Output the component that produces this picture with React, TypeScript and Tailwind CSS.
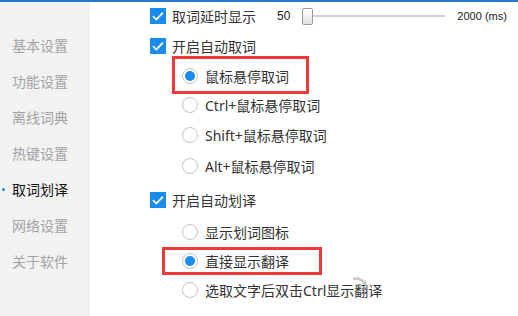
import React from 'react';

const font = { fontFamily: '"Noto Sans", "Noto Sans CJK SC", sans-serif' };

function Check() {
  return (
    <span className="flex h-4 w-4 shrink-0 items-center justify-center bg-[#1a8cee]">
      <svg viewBox="0 0 16 16" className="h-4 w-4">
        <path d="M3 8.2 L6.4 11.5 L13 4.6" fill="none" stroke="#fff" strokeWidth="1.7" />
      </svg>
    </span>
  );
}

function Radio({ on }: { on?: boolean }) {
  return (
    <span className="flex h-[16px] w-[16px] shrink-0 items-center justify-center rounded-full border border-[#c4c4c4] bg-white">
      {on && <span className="h-[10px] w-[10px] rounded-full bg-[#1a8cee]" />}
    </span>
  );
}

const menu = ['基本设置', '功能设置', '离线词典', '热键设置', '取词划译', '网络设置', '关于软件'];

export default function App() {
  return (
    <div className="flex h-[316px] w-[518px] flex-col overflow-hidden bg-white text-[14px] text-[#333]" style={font}>
      <div className="h-[2px] w-full shrink-0 bg-[#1f7acc]" />
      <div className="flex flex-1">
        {/* Sidebar */}
        <div className="w-[90px] shrink-0 bg-[#f2f2f2] pt-[25px]">
          {menu.map((m) => (
            <div key={m} className="relative flex h-[36px] items-center pl-[12px]">
              {m === '取词划译' ? (
                <>
                  <span className="absolute left-[2px] top-[17px] h-[3px] w-[3px] rounded-full bg-[#1a8cee]" />
                  <span className="text-[#111]">{m}</span>
                </>
              ) : (
                <span className="text-[#a3a3a3]">{m}</span>
              )}
            </div>
          ))}
        </div>

        {/* Content */}
        <div className="flex flex-1 flex-col pl-[60px]">
          <div className="flex h-[28px] items-center">
            <Check />
            <span className="ml-[6px]">取词延时显示</span>
            <span className="ml-[21px] text-[12px] text-[#222]" style={{ fontFamily: '"Liberation Sans", sans-serif' }}>50</span>
            <div className="ml-[12px] flex items-center">
              <span className="h-[17px] w-[11px] rounded-[2px] border border-[#9a9a9a] bg-gradient-to-b from-white to-[#e2e2e2]" />
              <span className="h-[2px] w-[132px] bg-[#d0d0d0]" />
            </div>
            <span className="ml-[12px] text-[11px] text-[#222]" style={{ fontFamily: '"Liberation Sans", sans-serif' }}>2000 (ms)</span>
          </div>
          <div className="flex h-[32px] items-center">
            <Check />
            <span className="ml-[6px]">开启自动取词</span>
          </div>
          <div className="relative flex h-[28px] items-center pl-[32px]">
            <span className="absolute left-[22px] top-[-6px] h-[38px] w-[137px] border-[3px] border-[#f03a3a]" />
            <Radio on />
            <span className="ml-[7px]">鼠标悬停取词</span>
          </div>
          <div className="flex h-[30px] items-center pl-[32px]">
            <Radio />
            <span className="ml-[7px]">Ctrl+鼠标悬停取词</span>
          </div>
          <div className="flex h-[30px] items-center pl-[32px]">
            <Radio />
            <span className="ml-[7px]">Shift+鼠标悬停取词</span>
          </div>
          <div className="flex h-[32px] items-center pl-[32px]">
            <Radio />
            <span className="ml-[7px]">Alt+鼠标悬停取词</span>
          </div>
          <div className="flex h-[36px] items-center">
            <Check />
            <span className="ml-[6px]">开启自动划译</span>
          </div>
          <div className="flex h-[28px] items-center pl-[32px]">
            <Radio />
            <span className="ml-[7px]">显示划词图标</span>
          </div>
          <div className="relative flex h-[30px] items-center pl-[32px]">
            <span className="absolute left-[12px] top-[1px] h-[28px] w-[160px] border-[3px] border-[#f03a3a]" />
            <Radio on />
            <span className="ml-[7px]">直接显示翻译</span>
          </div>
          <div className="relative flex h-[28px] items-center pl-[32px]">
            <Radio />
            <span className="ml-[7px]">选取文字后双击Ctrl显示翻译</span>
            <svg className="absolute left-[202px] top-[1px]" width="16" height="10" viewBox="0 0 16 10">
              <path d="M1 2 Q8 0 13 7" fill="none" stroke="#c8c8c8" strokeWidth="2.5" />
              <path d="M10 7 L15 9 L14 3 Z" fill="#c8c8c8" />
            </svg>
          </div>
        </div>
      </div>
    </div>
  );
}
